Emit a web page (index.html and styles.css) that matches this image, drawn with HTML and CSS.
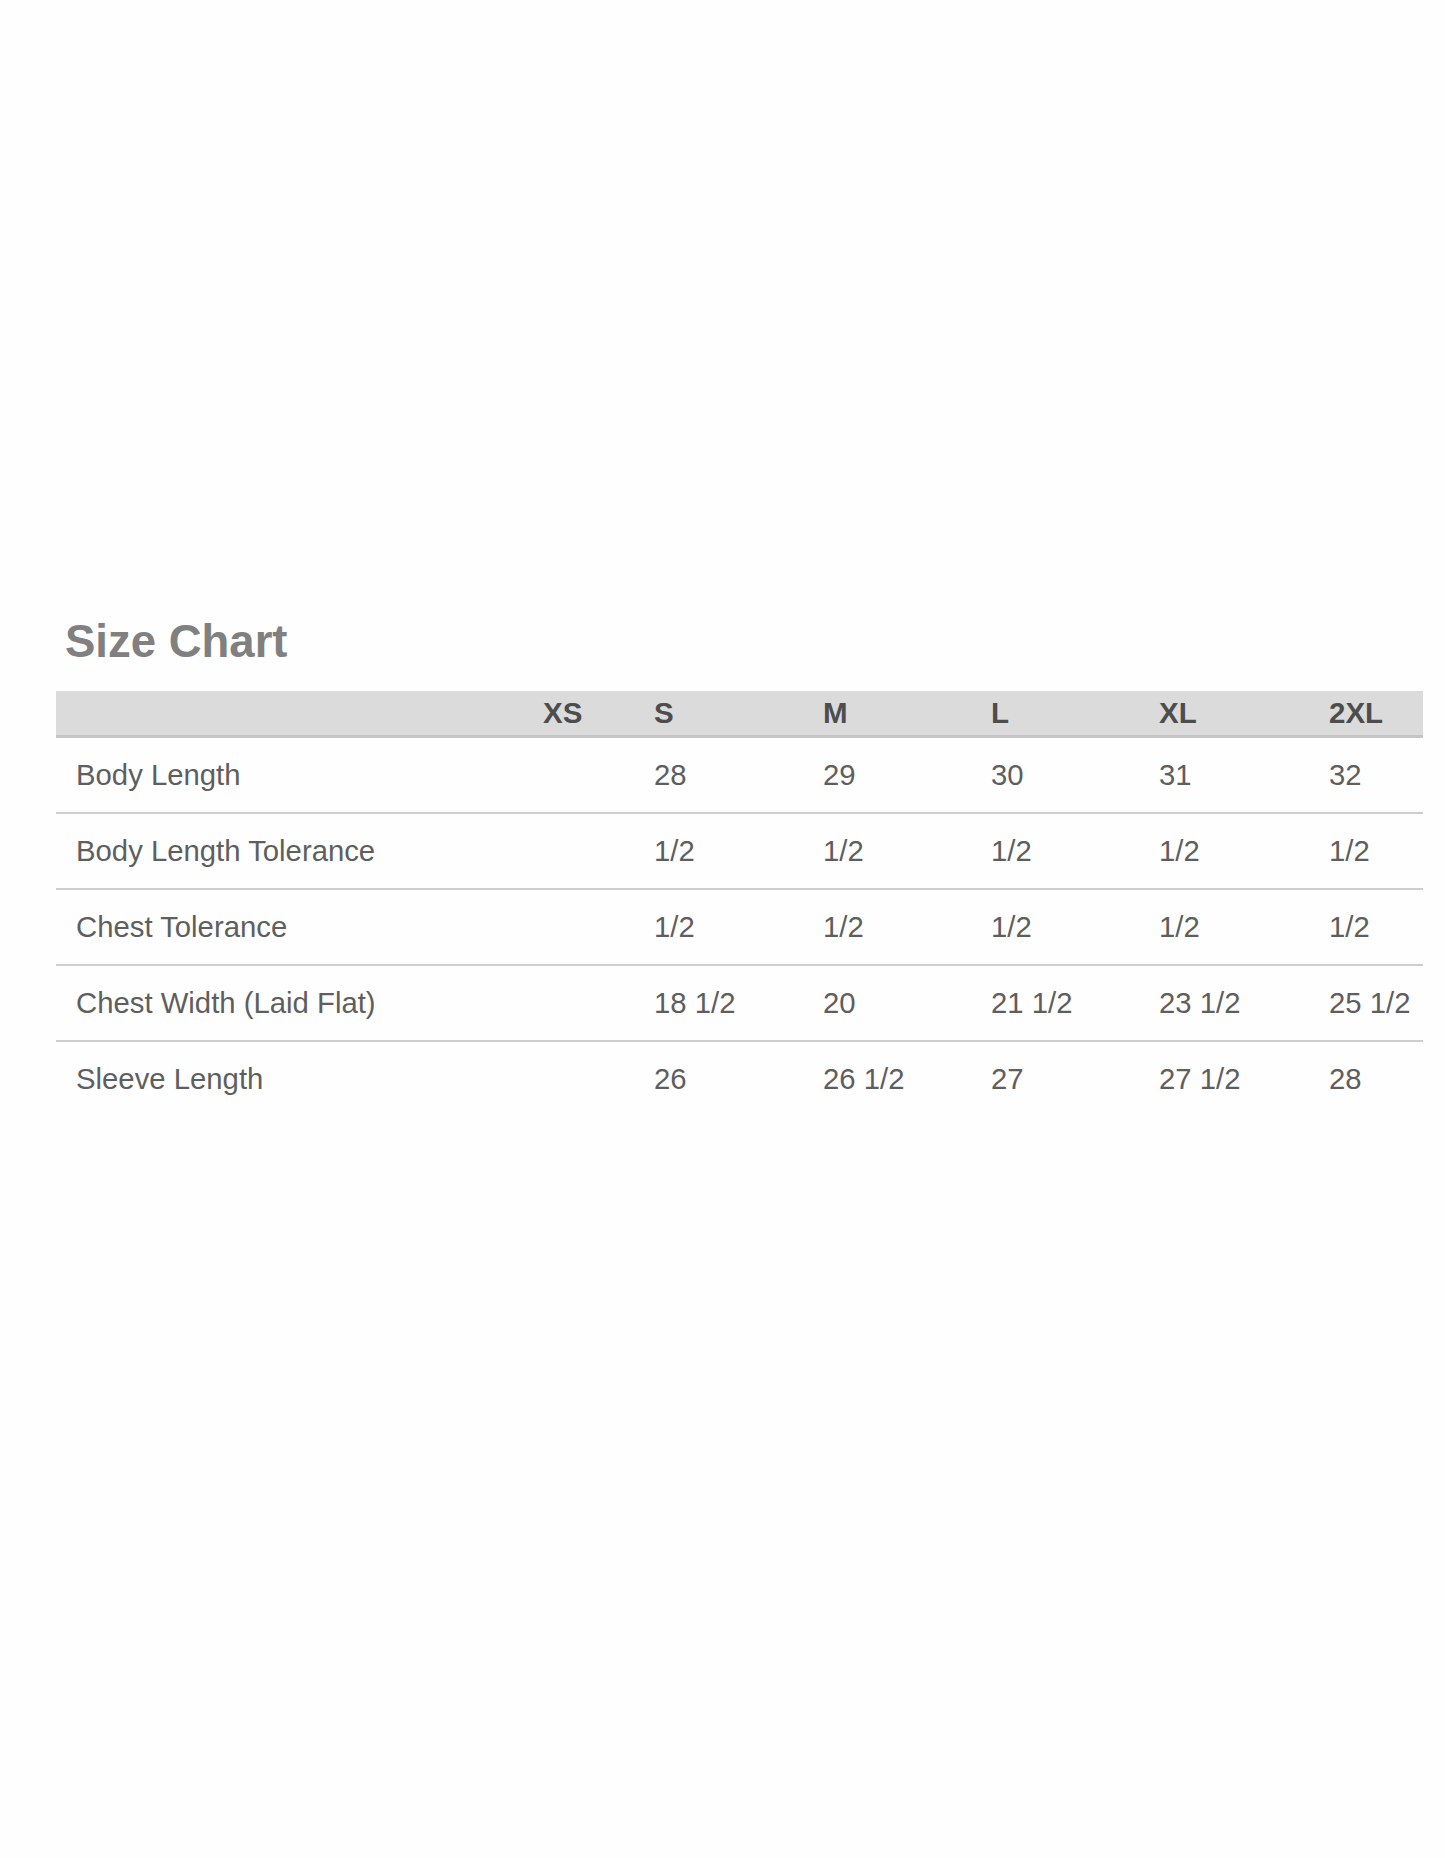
FILE: index.html
```html
<!DOCTYPE html>
<html lang="en">
<head>
<meta charset="utf-8">
<title>Size Chart</title>
<link rel="stylesheet" href="styles.css">
</head>
<body>
<main class="page">
  <h1 class="title">Size Chart</h1>
  <table class="chart">
    <colgroup>
      <col class="c-label"><col class="c-xs"><col class="c-s"><col class="c-m"><col class="c-l"><col class="c-xl"><col class="c-2xl">
    </colgroup>
    <thead>
      <tr><th></th><th>XS</th><th>S</th><th>M</th><th>L</th><th>XL</th><th>2XL</th></tr>
    </thead>
    <tbody>
      <tr><td>Body Length</td><td></td><td>28</td><td>29</td><td>30</td><td>31</td><td>32</td></tr>
      <tr><td>Body Length Tolerance</td><td></td><td>1/2</td><td>1/2</td><td>1/2</td><td>1/2</td><td>1/2</td></tr>
      <tr><td>Chest Tolerance</td><td></td><td>1/2</td><td>1/2</td><td>1/2</td><td>1/2</td><td>1/2</td></tr>
      <tr><td>Chest Width (Laid Flat)</td><td></td><td>18 1/2</td><td>20</td><td>21 1/2</td><td>23 1/2</td><td>25 1/2</td></tr>
      <tr><td>Sleeve Length</td><td></td><td>26</td><td>26 1/2</td><td>27</td><td>27 1/2</td><td>28</td></tr>
    </tbody>
  </table>
</main>
</body>
</html>
```

FILE: styles.css
```css
html, body {
  margin: 0;
  padding: 0;
  background: #fefefe;
}
body {
  font-family: "Liberation Sans", Arial, sans-serif;
  width: 1445px;
  height: 1858px;
}
.page {
  padding: 616px 22px 0 56px;
}
.title {
  margin: 0 0 23px 9px;
  font-size: 45.5px;
  line-height: 52px;
  font-weight: 700;
  color: #808080;
}
.chart {
  border-collapse: collapse;
  table-layout: fixed;
  width: 1367px;
}
.c-label { width: 487px; }
.c-xs { width: 111px; }
.c-s { width: 169px; }
.c-m { width: 168px; }
.c-l { width: 168px; }
.c-xl { width: 170px; }
.c-2xl { width: 94px; }
.chart th {
  background: #dbdbdb;
  border-bottom: 3px solid #c5c5c5;
  height: 44px;
  padding: 0;
  text-align: left;
  font-size: 29.5px;
  font-weight: 700;
  color: #4d4d4d;
  vertical-align: middle;
}
.chart td {
  height: 74px;
  padding: 0;
  text-align: left;
  font-size: 29.3px;
  color: #5e5e5e;
  vertical-align: middle;
  border-bottom: 2px solid #cecece;
}
.chart td:first-child {
  padding-left: 20px;
}
.chart tbody tr:last-child td {
  border-bottom: none;
}
```
